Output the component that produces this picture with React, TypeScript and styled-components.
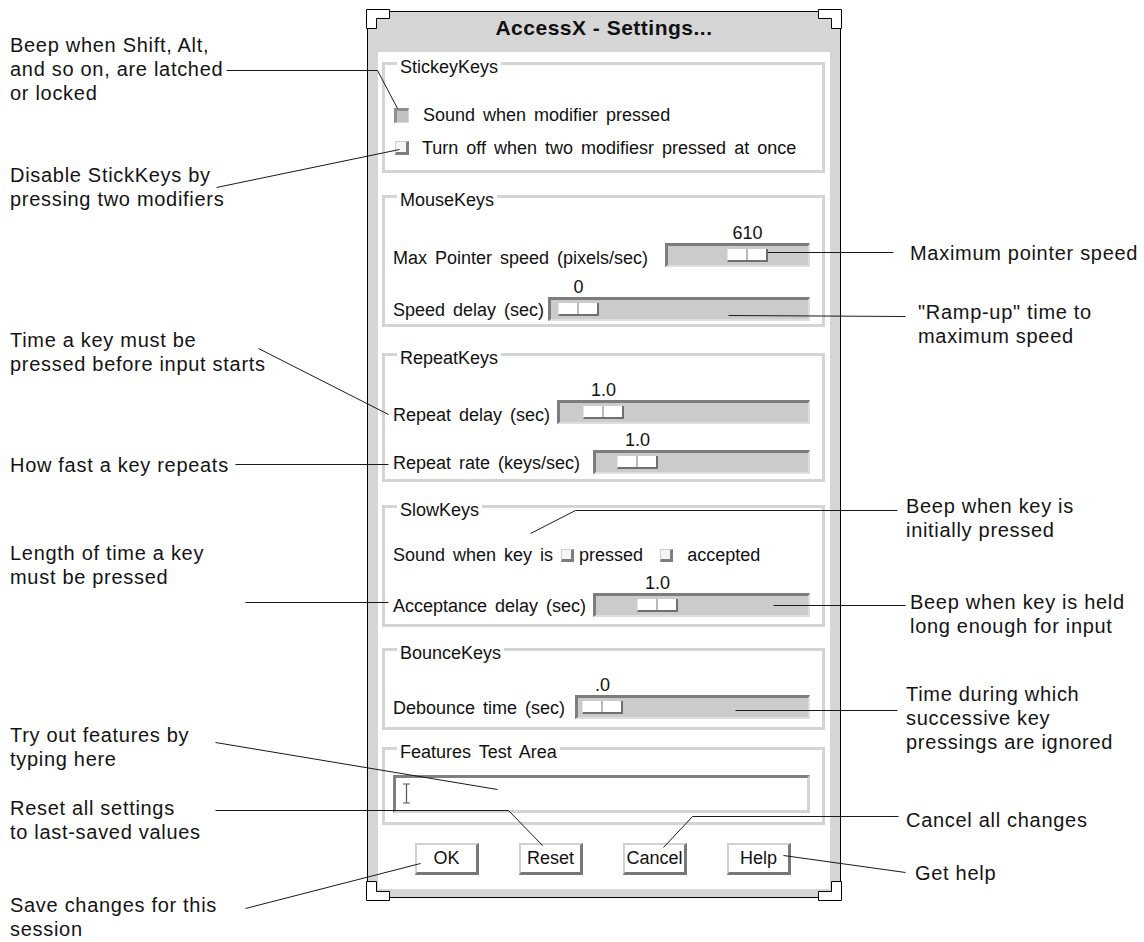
import React from 'react';
import styled, { createGlobalStyle } from 'styled-components';

const GlobalStyle = createGlobalStyle`
  html, body {
    margin: 0;
    padding: 0;
    background: #fff;
  }
  body {
    font-family: 'Liberation Sans', Arial, Helvetica, sans-serif;
    color: #111;
  }
`;

type NoteData = { lines: string[]; mt: number; indent?: number };
type SliderData = { label: string; value: string; w: number; pos: number; dy?: number };

const leftNotes: NoteData[] = [
  { lines: ['Beep when Shift, Alt,', 'and so on, are latched', 'or locked'], mt: 33 },
  { lines: ['Disable StickKeys by', 'pressing two modifiers'], mt: 58 },
  { lines: ['Time a key must be', 'pressed before input starts'], mt: 117 },
  { lines: ['How fast a key repeats'], mt: 77 },
  { lines: ['Length of time a key', 'must be pressed'], mt: 64 },
  { lines: ['Try out features by', 'typing here'], mt: 134 },
  { lines: ['Reset all settings', 'to last-saved values'], mt: 25 },
  { lines: ['Save changes for this', 'session'], mt: 49 },
];

const rightNotes: NoteData[] = [
  { lines: ['Maximum pointer speed'], mt: 241, indent: 4 },
  { lines: ['"Ramp-up" time to', 'maximum speed'], mt: 35, indent: 12 },
  { lines: ['Beep when key is', 'initially pressed'], mt: 146 },
  { lines: ['Beep when key is held', 'long enough for input'], mt: 48, indent: 4 },
  { lines: ['Time during which', 'successive key', 'pressings are ignored'], mt: 44 },
  { lines: ['Cancel all changes'], mt: 54 },
  { lines: ['Get help'], mt: 29, indent: 9 },
];

// leader lines drawn over the figure
const leaders: number[][][] = [
  [[226, 70], [377, 70], [397, 108]],
  [[216, 187], [399, 149]],
  [[767, 252], [893, 252]],
  [[728, 315], [905, 316]],
  [[258, 348], [388, 414]],
  [[235, 464], [388, 464]],
  [[530, 533], [575, 510], [897, 510]],
  [[245, 602], [388, 602]],
  [[773, 605], [905, 605]],
  [[735, 710], [897, 710]],
  [[215, 742], [497, 789]],
  [[215, 810], [508, 810], [542, 845]],
  [[663, 847], [692, 816], [898, 816]],
  [[783, 855], [905, 872]],
  [[420, 863], [245, 908]],
];

const mouseSliders: SliderData[] = [
  { label: 'Max Pointer speed (pixels/sec)', value: '610', w: 145, pos: 59, dy: 3 },
  { label: 'Speed delay (sec)', value: '0', w: 262, pos: 7 },
];

const repeatSliders: SliderData[] = [
  { label: 'Repeat delay (sec)', value: '1.0', w: 253, pos: 23, dy: 3 },
  { label: 'Repeat rate (keys/sec)', value: '1.0', w: 217, pos: 21 },
];

const Page = styled.div`
  position: relative;
  width: 1144px;
  height: 942px;
  display: flex;
  align-items: flex-start;
  overflow: hidden;
`;

const NoteColumn = styled.div<{ $w: number; $pl: number }>`
  width: ${(p) => p.$w}px;
  padding-left: ${(p) => p.$pl}px;
  box-sizing: border-box;
  display: flex;
  flex-direction: column;
  flex-shrink: 0;
`;

const Note = styled.div<{ $mt: number; $indent?: number }>`
  margin-top: ${(p) => p.$mt}px;
  margin-left: ${(p) => p.$indent ?? 0}px;
  font-size: 20px;
  line-height: 24px;
  letter-spacing: 0.7px;
  white-space: nowrap;
  color: #141414;
`;

const Frame = styled.div`
  position: relative;
  margin-top: 11px;
  width: 474px;
  height: 887px;
  box-sizing: border-box;
  border: 1px solid #000;
  background: #d6d6d6;
  padding: 0 10px 8px;
  display: flex;
  flex-direction: column;
  flex-shrink: 0;
`;

const Corner = styled.svg<{ $h: 'left' | 'right'; $v: 'top' | 'bottom' }>`
  position: absolute;
  ${(p) => p.$h}: -2px;
  ${(p) => p.$v}: ${(p) => (p.$v === 'top' ? -3 : -4)}px;
  width: 24px;
  height: 20px;
  transform: scale(${(p) => (p.$h === 'right' ? -1 : 1)}, ${(p) => (p.$v === 'bottom' ? -1 : 1)});
  fill: #fff;
  stroke: #000;
  stroke-width: 1;
`;

const TitleBar = styled.div`
  height: 40px;
  line-height: 32px;
  text-align: center;
  font-size: 21px;
  font-weight: bold;
  letter-spacing: 0.5px;
  color: #111;
`;

const Body = styled.div`
  flex: 1;
  background: #fff;
  display: flex;
  flex-direction: column;
  padding: 0 5px 0 4px;
  font-size: 18px;
  word-spacing: 3px;
  color: #111;
`;

const Group = styled.div<{ $mt: number; $h: number; $pt: number; $gap?: number }>`
  position: relative;
  margin-top: ${(p) => p.$mt}px;
  height: ${(p) => p.$h}px;
  box-sizing: border-box;
  border: 3px solid #d4d4d4;
  padding: ${(p) => p.$pt}px 12px 0 8px;
  display: flex;
  flex-direction: column;
  gap: ${(p) => p.$gap ?? 0}px;
`;

const GroupTitle = styled.div`
  position: absolute;
  top: -8px;
  left: 12px;
  padding: 0 3px;
  background: #fff;
  line-height: 20px;
  white-space: nowrap;
`;

const CheckRow = styled.div`
  display: flex;
  align-items: center;
  height: 24px;
  white-space: nowrap;
`;

const Check = styled.span<{ $on?: boolean; $size: number; $ml?: number; $mr?: number }>`
  display: inline-block;
  flex-shrink: 0;
  width: ${(p) => p.$size}px;
  height: ${(p) => p.$size}px;
  margin-left: ${(p) => p.$ml ?? 1}px;
  margin-right: ${(p) => p.$mr ?? 14}px;
  box-sizing: border-box;
  border-style: solid;
  ${(p) =>
    p.$on
      ? `background: #c2c2c2;
         border-width: 3px 1px 1px 3px;
         border-color: #8e8e8e #d8d8d8 #d8d8d8 #8e8e8e;`
      : `background: #f6f6f6;
         border-width: 1px 3px 3px 1px;
         border-color: #cfcfcf #7e7e7e #7e7e7e #cfcfcf;`}
`;

const SliderRow = styled.div`
  display: flex;
  justify-content: space-between;
  align-items: flex-end;
`;

const SliderLabel = styled.span<{ $dy?: number }>`
  line-height: 24px;
  white-space: nowrap;
  margin-bottom: ${(p) => -(p.$dy ?? 1)}px;
`;

const Scale = styled.div<{ $w: number }>`
  width: ${(p) => p.$w}px;
  display: flex;
  flex-direction: column;
`;

const ScaleValue = styled.div<{ $pos: number }>`
  margin-left: ${(p) => p.$pos + 3}px;
  width: 41px;
  text-align: center;
  line-height: 20px;
  word-spacing: 0;
`;

const Trough = styled.div`
  height: 24px;
  box-sizing: border-box;
  border-style: solid;
  border-width: 3px 2px 2px 3px;
  border-color: #7d7d7d #dedede #dedede #7d7d7d;
  background: #cbcbcb;
  padding-top: 3px;
  display: flex;
  align-items: flex-start;
`;

const Thumb = styled.div<{ $pos: number }>`
  margin-left: ${(p) => p.$pos}px;
  width: 41px;
  height: 13px;
  box-sizing: border-box;
  background: #fff;
  border-style: solid;
  border-width: 0 2px 2px 1px;
  border-color: #fff #6f6f6f #6f6f6f #e4e4e4;
  display: flex;
`;

const ThumbHalf = styled.span`
  flex: 1;
  & + & {
    border-left: 2px solid #b9b9b9;
  }
`;

const TextField = styled.div`
  height: 38px;
  box-sizing: border-box;
  border-style: solid;
  border-width: 3px;
  border-color: #7f7f7f #d4d4d4 #d4d4d4 #7f7f7f;
  background: #fff;
  padding: 5px 0 0 6px;
`;

const IBeam = styled.svg`
  display: block;
  width: 9px;
  height: 21px;
  stroke: #555;
  stroke-width: 1.2;
  fill: none;
`;

const ButtonRow = styled.div`
  margin-top: 18px;
  padding-left: 33px;
  display: flex;
  gap: 40px;
`;

const Button = styled.button`
  width: 64px;
  height: 32px;
  padding: 0;
  box-sizing: border-box;
  background: #fff;
  border-style: solid;
  border-width: 2px 3px 3px 2px;
  border-color: #d2d2d2 #787878 #787878 #d2d2d2;
  font-family: 'Liberation Sans', Arial, sans-serif;
  font-size: 18px;
  color: #111;
  white-space: nowrap;
`;

const Leaders = styled.svg`
  position: absolute;
  left: 0;
  top: 0;
  width: 1144px;
  height: 942px;
  pointer-events: none;
  fill: none;
  stroke: #1a1a1a;
  stroke-width: 1;
`;

function NoteText({ note }: { note: NoteData }) {
  return (
    <Note $mt={note.mt} $indent={note.indent}>
      {note.lines.map((l, i) => (
        <div key={i}>{l}</div>
      ))}
    </Note>
  );
}

function Slider({ s }: { s: SliderData }) {
  return (
    <SliderRow>
      <SliderLabel $dy={s.dy}>{s.label}</SliderLabel>
      <Scale $w={s.w}>
        <ScaleValue $pos={s.pos}>{s.value}</ScaleValue>
        <Trough>
          <Thumb $pos={s.pos}>
            <ThumbHalf />
            <ThumbHalf />
          </Thumb>
        </Trough>
      </Scale>
    </SliderRow>
  );
}

const cornerPath = 'M0.5 0.5 H23.5 V9.5 H10.5 V19.5 H0.5 Z';

export default function App() {
  return (
    <>
      <GlobalStyle />
      <Page>
        <NoteColumn $w={367} $pl={10}>
          {leftNotes.map((n, i) => (
            <NoteText key={i} note={n} />
          ))}
        </NoteColumn>

        <Frame>
          <Corner $h="left" $v="top" viewBox="0 0 24 20"><path d={cornerPath} /></Corner>
          <Corner $h="right" $v="top" viewBox="0 0 24 20"><path d={cornerPath} /></Corner>
          <Corner $h="left" $v="bottom" viewBox="0 0 24 20"><path d={cornerPath} /></Corner>
          <Corner $h="right" $v="bottom" viewBox="0 0 24 20"><path d={cornerPath} /></Corner>

          <TitleBar>AccessX - Settings...</TitleBar>
          <Body>
            <Group $mt={10} $h={111} $pt={38} $gap={9}>
              <GroupTitle>StickeyKeys</GroupTitle>
              <CheckRow>
                <Check $on $size={15} />
                Sound when modifier pressed
              </CheckRow>
              <CheckRow>
                <Check $size={14} $ml={2} $mr={13} />
                Turn off when two modifiesr pressed at once
              </CheckRow>
            </Group>

            <Group $mt={22} $h={132} $pt={25} $gap={10}>
              <GroupTitle>MouseKeys</GroupTitle>
              {mouseSliders.map((s) => (
                <Slider key={s.label} s={s} />
              ))}
            </Group>

            <Group $mt={26} $h={129} $pt={24} $gap={6}>
              <GroupTitle>RepeatKeys</GroupTitle>
              {repeatSliders.map((s) => (
                <Slider key={s.label} s={s} />
              ))}
            </Group>

            <Group $mt={23} $h={122} $pt={35} $gap={6}>
              <GroupTitle>SlowKeys</GroupTitle>
              <CheckRow>
                Sound when key is
                <Check $size={13} $ml={8} $mr={5} />
                pressed
                <Check $size={13} $ml={17} $mr={14} />
                accepted
              </CheckRow>
              <Slider s={{ label: 'Acceptance delay (sec)', value: '1.0', w: 217, pos: 41 }} />
            </Group>

            <Group $mt={21} $h={82} $pt={24}>
              <GroupTitle>BounceKeys</GroupTitle>
              <Slider s={{ label: 'Debounce time (sec)', value: '.0', w: 235, pos: 4 }} />
            </Group>

            <Group $mt={17} $h={78} $pt={25}>
              <GroupTitle>Features Test Area</GroupTitle>
              <TextField>
                <IBeam viewBox="0 0 9 21">
                  <path d="M1 1 H8 M4.5 1 V20 M1 20 H8" />
                </IBeam>
              </TextField>
            </Group>

            <ButtonRow>
              <Button>OK</Button>
              <Button>Reset</Button>
              <Button>Cancel</Button>
              <Button>Help</Button>
            </ButtonRow>
          </Body>
        </Frame>

        <NoteColumn $w={303} $pl={65}>
          {rightNotes.map((n, i) => (
            <NoteText key={i} note={n} />
          ))}
        </NoteColumn>

        <Leaders viewBox="0 0 1144 942">
          {leaders.map((pts, i) => (
            <polyline key={i} points={pts.map(([x, y]) => `${x + 0.5},${y + 0.5}`).join(' ')} />
          ))}
        </Leaders>
      </Page>
    </>
  );
}
